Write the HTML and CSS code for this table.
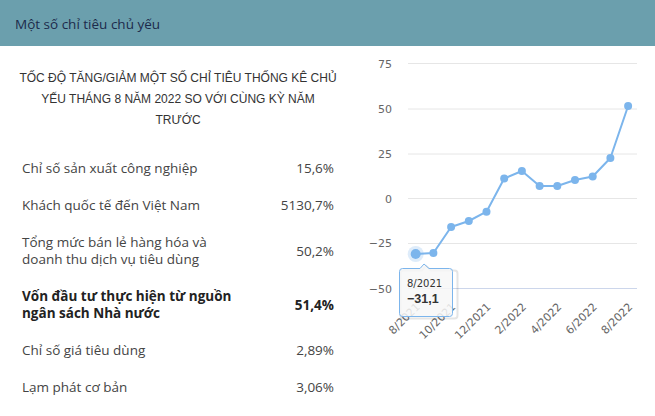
FILE: index.html
```html
<!DOCTYPE html>
<html lang="vi">
<head>
<meta charset="utf-8">
<title>Một số chỉ tiêu chủ yếu</title>
<link rel="stylesheet" href="styles.css">
</head>
<body>
<header class="header">
  <h2 class="header-title">Một số chỉ tiêu chủ yếu</h2>
</header>
<main class="main">
  <section class="left">
    <p class="caption">TỐC ĐỘ TĂNG/GIẢM MỘT SỐ CHỈ TIÊU THỐNG KÊ CHỦ YẾU THÁNG 8 NĂM 2022 SO VỚI CÙNG KỲ NĂM TRƯỚC</p>
    <ul class="rows">
      <li class="row"><span class="label">Chỉ số sản xuất công nghiệp</span><span class="value">15,6%</span></li>
      <li class="row"><span class="label">Khách quốc tế đến Việt Nam</span><span class="value">5130,7%</span></li>
      <li class="row"><span class="label">Tổng mức bán lẻ hàng hóa và doanh thu dịch vụ tiêu dùng</span><span class="value">50,2%</span></li>
      <li class="row row-strong"><span class="label">Vốn đầu tư thực hiện từ nguồn ngân sách Nhà nước</span><span class="value">51,4%</span></li>
      <li class="row"><span class="label">Chỉ số giá tiêu dùng</span><span class="value">2,89%</span></li>
      <li class="row"><span class="label">Lạm phát cơ bản</span><span class="value">3,06%</span></li>
    </ul>
  </section>
  <section class="chart">
    <svg class="chart-svg" width="305" height="370" viewBox="350 46 305 370" xmlns="http://www.w3.org/2000/svg">
      <g class="grid">
        <line x1="408" y1="63.5" x2="637" y2="63.5"/>
        <line x1="408" y1="109" x2="637" y2="109"/>
        <line x1="408" y1="154" x2="637" y2="154"/>
        <line x1="408" y1="198.5" x2="637" y2="198.5"/>
        <line x1="408" y1="243.5" x2="637" y2="243.5"/>
      </g>
      <line class="axis" x1="408" y1="288.5" x2="637" y2="288.5"/>
      <g class="ylabels">
        <text x="392" y="67.8">75</text>
        <text x="392" y="113.4">50</text>
        <text x="392" y="158.3">25</text>
        <text x="392" y="202.5">0</text>
        <text x="392" y="247.3">−25</text>
        <text x="392" y="292.6">−50</text>
      </g>
      <g class="xlabels">
        <text x="420.7" y="307.5" transform="rotate(-45 420.7 307.5)">8/2021</text>
        <text x="456.1" y="307.5" transform="rotate(-45 456.1 307.5)">10/2021</text>
        <text x="491.5" y="307.5" transform="rotate(-45 491.5 307.5)">12/2021</text>
        <text x="526.9" y="307.5" transform="rotate(-45 526.9 307.5)">2/2022</text>
        <text x="562.3" y="307.5" transform="rotate(-45 562.3 307.5)">4/2022</text>
        <text x="597.7" y="307.5" transform="rotate(-45 597.7 307.5)">6/2022</text>
        <text x="633.1" y="307.5" transform="rotate(-45 633.1 307.5)">8/2022</text>
      </g>
      <circle class="halo" cx="415.7" cy="254" r="8"/>
      <polyline class="series" points="415.7,254 433.4,253 451.1,227 468.8,221 486.5,211.7 504.2,178.5 521.9,171 539.6,186 557.3,186 575,180 592.7,176.5 610.4,158 628.1,106"/>
      <g class="markers">
        <circle cx="415.7" cy="254" r="5"/>
        <circle cx="433.4" cy="253" r="4"/>
        <circle cx="451.1" cy="227" r="4"/>
        <circle cx="468.8" cy="221" r="4"/>
        <circle cx="486.5" cy="211.7" r="4"/>
        <circle cx="504.2" cy="178.5" r="4"/>
        <circle cx="521.9" cy="171" r="4"/>
        <circle cx="539.6" cy="186" r="4"/>
        <circle cx="557.3" cy="186" r="4"/>
        <circle cx="575" cy="180" r="4"/>
        <circle cx="592.7" cy="176.5" r="4"/>
        <circle cx="610.4" cy="158" r="4"/>
        <circle cx="628.1" cy="106" r="4"/>
      </g>
      <g class="tooltip">
        <path class="tooltip-shadow" d="M402.5 269.5 H421 L425 265 L430 269.5 H453.5 Q456.5 269.5 456.5 272.5 V314.5 Q456.5 317.5 453.5 317.5 H402.5 Q399.5 317.5 399.5 314.5 V272.5 Q399.5 269.5 402.5 269.5 Z" transform="translate(1 1)"/>
        <path class="tooltip-box" d="M402.5 268.5 H420 L424 264 L429 268.5 H449.5 Q452.5 268.5 452.5 271.5 V313.5 Q452.5 316.5 449.5 316.5 H402.5 Q399.5 316.5 399.5 313.5 V271.5 Q399.5 268.5 402.5 268.5 Z"/>
        <text class="tooltip-head" x="407" y="287">8/2021</text>
        <text class="tooltip-value" x="407" y="302.5">−31,1</text>
      </g>
    </svg>
  </section>
</main>
</body>
</html>
```

FILE: styles.css
```css
html, body {
  margin: 0;
  padding: 0;
  background: #ffffff;
}

body {
  width: 655px;
  height: 416px;
  overflow: hidden;
  font-family: "Open Sans", "Noto Sans", sans-serif;
}

.header {
  height: 44px;
  padding-top: 2px;
  background: #6b9fad;
}

.header-title {
  margin: 0;
  padding-left: 15px;
  font-size: 13.5px;
  font-weight: 400;
  line-height: 44px;
  color: #1c2a4b;
}

.main {
  display: flex;
}

.left {
  width: 312px;
  padding: 22px 16px 0 22px;
}

.caption {
  margin: 0 -3px;
  font-family: "Liberation Sans", Arial, sans-serif;
  font-size: 12px;
  line-height: 21px;
  color: #333333;
  text-align: center;
}

.rows {
  list-style: none;
  margin: 19px 0 0;
  padding: 0;
}

.row {
  display: flex;
  justify-content: space-between;
  align-items: center;
  padding: 10px 0;
  font-size: 13.5px;
  line-height: 17px;
  color: #444444;
}

.label {
  max-width: 215px;
}

.value {
  text-align: right;
}

.row-strong {
  font-weight: 700;
  color: #222222;
}

.chart {
  width: 305px;
  height: 370px;
}

.chart-svg {
  display: block;
  font-family: "DejaVu Sans", sans-serif;
}

.grid line {
  stroke: #e6e6e6;
  stroke-width: 1;
}

.axis {
  stroke: #ccd6eb;
  stroke-width: 1;
}

.ylabels text {
  font-size: 11px;
  fill: #666666;
  text-anchor: end;
}

.xlabels text {
  font-size: 11px;
  fill: #666666;
  text-anchor: end;
}

.series {
  fill: none;
  stroke: #7cb5ec;
  stroke-width: 2;
  stroke-linejoin: round;
  stroke-linecap: round;
}

.markers circle {
  fill: #7cb5ec;
}

.halo {
  fill: #7cb5ec;
  opacity: 0.25;
}

.tooltip-shadow {
  fill: none;
  stroke: rgba(0, 0, 0, 0.1);
  stroke-width: 2;
}

.tooltip-box {
  fill: rgba(247, 247, 247, 0.85);
  stroke: #7cb5ec;
  stroke-width: 1;
}

.tooltip-head {
  font-size: 10px;
  fill: #333333;
}

.tooltip-value {
  font-family: "Liberation Sans", Arial, sans-serif;
  font-size: 12.5px;
  font-weight: 700;
  fill: #333333;
}
```
